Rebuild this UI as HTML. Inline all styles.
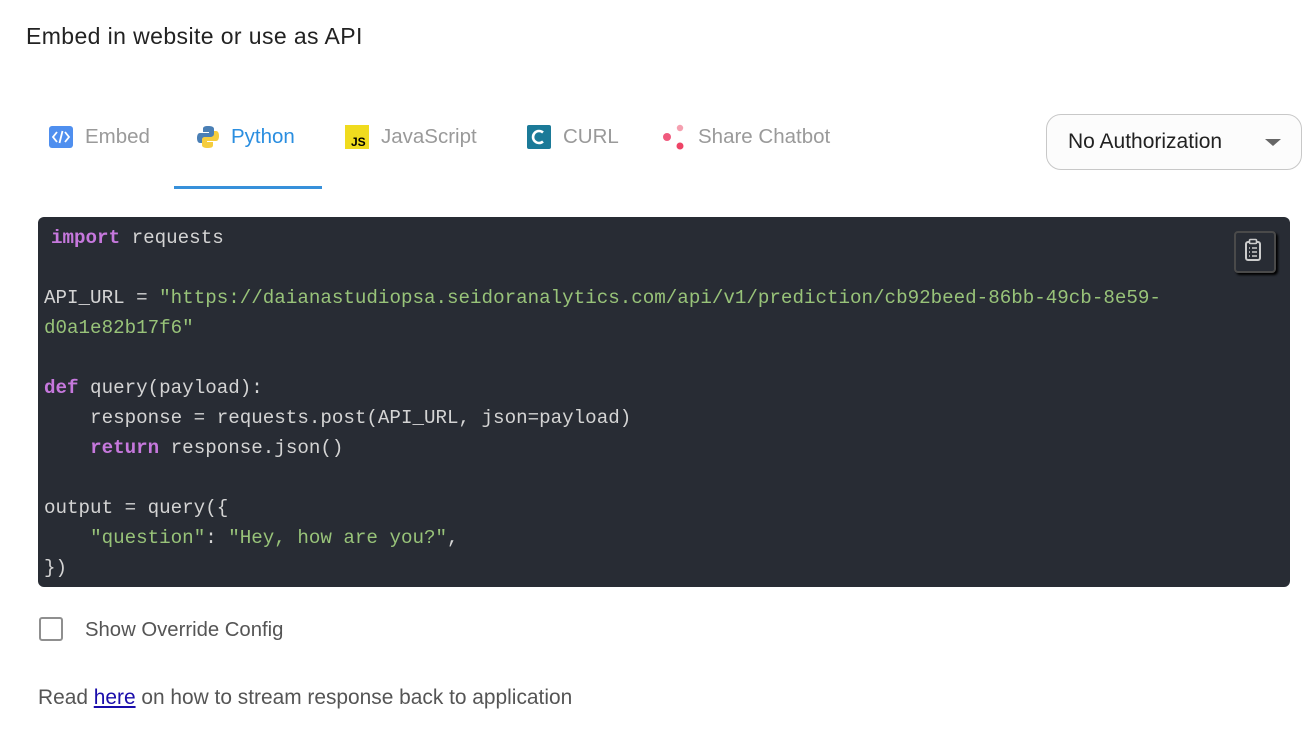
<!DOCTYPE html>
<html><head><meta charset="utf-8"><style>
body{margin:0;width:1314px;height:737px;background:#fff;font-family:"Liberation Sans",Arial,sans-serif;position:relative;overflow:hidden}
.abs{position:absolute}
.title{left:26px;top:23px;font-size:23px;color:#222;font-weight:500;letter-spacing:0.4px}
.tab{top:123px;font-size:20.5px;color:#9a9a9a;display:flex;align-items:center;height:28px;white-space:nowrap}
.tab svg{margin-right:12px}
.active{color:#2a8ee0}
.ul{left:174px;top:186px;width:148px;height:3px;background:#3790da}
.dd{left:1046px;top:114px;width:254px;height:54px;border:1px solid #c8c8c8;border-radius:15px;background:#fcfcfc}
.dd span{position:absolute;left:21px;top:15px;font-size:21px;color:#222}
.dd i{position:absolute;left:218px;top:24px;border-left:8px solid transparent;border-right:8px solid transparent;border-top:7px solid #666}
.code{left:38px;top:217px;width:1252px;height:370px;background:#282c34;border-radius:6px}
pre{margin:0;position:absolute;left:44px;top:223px;font-family:"Liberation Mono",monospace;font-size:19.2px;line-height:30px;color:#d4d4d4}
.k{color:#c678dd;font-weight:bold}.s{color:#98c379}
.copy{left:1234px;top:231px;width:38px;height:38px;border:2px solid #4a4a4a;border-radius:4px;background:#282c34;box-shadow:2px 2px 2px #000}
.cb{left:39px;top:617px;width:24px;height:24px;border:2.5px solid #8f8f8f;border-radius:3px;box-sizing:border-box}
.lbl{left:85px;top:619px;font-size:20.3px;color:#555}
.read{left:38px;top:686px;font-size:20.9px;color:#555}
.read a{color:#1a0dab;text-decoration:underline}
</style></head><body>
<div class="abs title">Embed in website or use as API</div>

<div class="abs tab" style="left:49px"><svg width="24" height="22" viewBox="0 0 24 22"><rect x="0" y="0" width="24" height="22" rx="3" fill="#4f8fef"/><path d="M8 6l-4 5 4 5M16 6l4 5-4 5M13.5 5l-3 12" stroke="#fff" stroke-width="1.8" fill="none"/></svg>Embed</div>
<div class="abs tab active" style="left:197px"><svg width="22" height="24" viewBox="0 0 22 24"><path d="M11 1c-5 0-5 2-5 3v3h6v1H3c-2 0-3 2-3 5s1 5 3 5h2v-3c0-2 2-3 4-3h5c2 0 3-1 3-3V4c0-2-2-3-6-3z" fill="#4a7fb5"/><path d="M11 23c5 0 5-2 5-3v-3h-6v-1h9c2 0 3-2 3-5s-1-5-3-5h-2v3c0 2-2 3-4 3H8c-2 0-3 1-3 3v5c0 2 2 3 6 3z" fill="#f5cd3e"/></svg>Python</div>
<div class="abs tab" style="left:345px"><svg width="24" height="24" viewBox="0 0 24 24"><rect width="24" height="24" fill="#f0db1e"/><text x="6" y="21" font-family="Liberation Sans" font-weight="bold" font-size="12" fill="#000">JS</text></svg>JavaScript</div>
<div class="abs tab" style="left:527px"><svg width="24" height="24" viewBox="0 0 24 24"><rect width="24" height="24" rx="2" fill="#1b7a98"/><path d="M16 7.5a6 6 0 1 0 0 9" stroke="#fff" stroke-width="2.6" fill="none"/></svg>CURL</div>
<div class="abs tab" style="left:662px"><svg width="24" height="26" viewBox="0 0 24 26"><circle cx="5" cy="13" r="4" fill="#f05a7e"/><circle cx="18" cy="4" r="3.2" fill="#f5a0b0"/><circle cx="18" cy="22" r="3.5" fill="#ee4466"/></svg>Share Chatbot</div>
<div class="abs ul"></div>

<div class="abs dd"><span>No Authorization</span><i></i></div>

<div class="abs code"></div>
<pre><span style="padding-left:7px"><span class="k">import</span> requests</span>

API_URL = <span class="s">"https://daianastudiopsa.seidoranalytics.com/api/v1/prediction/cb92beed-86bb-49cb-8e59-
d0a1e82b17f6"</span>

<span class="k">def</span> query(payload):
    response = requests.post(API_URL, json=payload)
    <span class="k">return</span> response.json()

output = query({
    <span class="s">"question"</span>: <span class="s">"Hey, how are you?"</span>,
})</pre>
<div class="abs copy"><svg width="38" height="38" viewBox="0 0 38 38" style="position:absolute;left:-2px;top:-2px"><rect x="12" y="11" width="14" height="18" rx="2" stroke="#ccc" stroke-width="2" fill="none"/><rect x="15.5" y="8.5" width="7" height="4" rx="1" stroke="#ccc" stroke-width="1.6" fill="#282c34"/><path d="M15 17h1M18 17h5M15 21h1M18 21h5M15 25h1M18 25h5" stroke="#ccc" stroke-width="1.4"/></svg></div>

<div class="abs cb"></div>
<div class="abs lbl">Show Override Config</div>
<div class="abs read">Read <a>here</a> on how to stream response back to application</div>
</body></html>
